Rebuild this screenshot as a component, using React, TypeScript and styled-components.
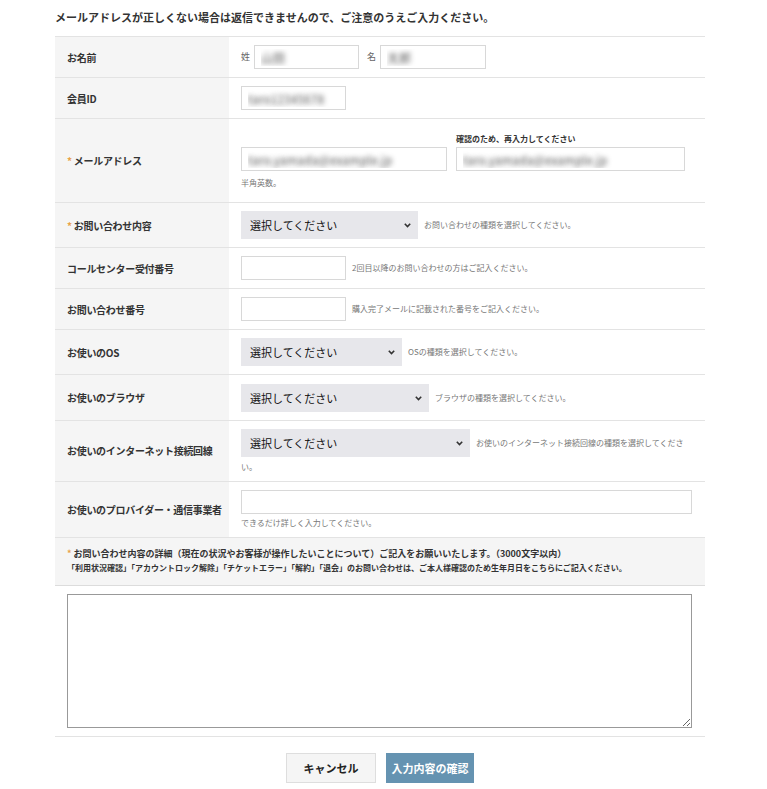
import React from "react";
import styled, { createGlobalStyle } from "styled-components";

const GlobalStyle = createGlobalStyle`
  body {
    margin: 0;
    background: #fff;
    font-family: "Noto Sans CJK JP", "Noto Sans", sans-serif;
    color: #333;
  }
`;

const Page = styled.div`
  width: 650px;
  margin-left: 55px;
  padding-top: 10px;
  padding-bottom: 6px;
`;

const Heading = styled.h2`
  margin: 0 0 12px;
  font-size: 11px;
  line-height: 14px;
  font-weight: 700;
  color: #333;
`;

const Table = styled.div`
  border-top: 1px solid #e3e3e3;
`;

const Row = styled.div`
  display: flex;
  border-bottom: 1px solid #e3e3e3;
`;

const Label = styled.div`
  width: 174px;
  flex-shrink: 0;
  box-sizing: border-box;
  padding: 0 12px;
  background: #f5f5f5;
  display: flex;
  align-items: center;
  white-space: nowrap;
  letter-spacing: -0.3px;
  font-size: 10px;
  font-weight: 700;
  color: #333;
`;

const Required = styled.span`
  color: #e8a24a;
  margin-right: 2px;
  font-weight: 700;
`;

const Value = styled.div<{ $pt?: number; $pb?: number }>`
  flex: 1;
  display: flex;
  align-items: center;
  padding: ${(p) => p.$pt ?? 8}px 12px ${(p) => p.$pb ?? 8}px;
`;

const Flow = styled.div`
  flex: 1;
  line-height: 14px;
`;

const Prefix = styled.span<{ $ml?: number }>`
  font-size: 9px;
  color: #666;
  margin-left: ${(p) => p.$ml ?? 0}px;
  margin-right: 4px;
  vertical-align: middle;
`;

const TextInput = styled.input<{ $w: number }>`
  box-sizing: border-box;
  width: ${(p) => p.$w}px;
  height: 24px;
  padding: 0 6px;
  border: 1px solid #d8d8d8;
  border-radius: 0;
  background: #fff;
  font-family: inherit;
  font-size: 12px;
  color: transparent;
  text-shadow: 0 0 5px rgba(80, 80, 80, 0.95);
  vertical-align: middle;
  outline: none;
`;

const SelectBox = styled.span<{ $w: number }>`
  position: relative;
  display: inline-block;
  width: ${(p) => p.$w}px;
  height: 28px;
  vertical-align: middle;
`;

const Select = styled.select`
  appearance: none;
  width: 100%;
  height: 100%;
  border: none;
  border-radius: 0;
  background: #e7e7eb;
  padding: 0 9px;
  font-family: inherit;
  font-size: 11px;
  color: #111;
  outline: none;
`;

const Chevron = styled.svg`
  position: absolute;
  right: 7px;
  top: 12px;
  pointer-events: none;
`;

const Note = styled.span<{ $block?: boolean }>`
  font-size: 8px;
  color: #777;
  margin-left: ${(p) => (p.$block ? 0 : 6)}px;
  display: ${(p) => (p.$block ? "block" : "inline")};
  margin-top: ${(p) => (p.$block ? 3 : 0)}px;
  line-height: 12px;
  vertical-align: middle;
`;

const MailGrid = styled.div`
  display: grid;
  grid-template-columns: 206px 229px;
  column-gap: 9px;
  row-gap: 3px;
  align-items: end;
`;

const SubLabel = styled.div`
  font-size: 8px;
  font-weight: 700;
  color: #333;
  line-height: 11px;
`;

const Details = styled.div`
  background: #f5f5f5;
  border-bottom: 1px solid #dcdcdc;
  padding: 9px 12px 11px;
`;

const DetailsLead = styled.div`
  font-size: 9px;
  font-weight: 700;
  line-height: 13px;
  color: #333;
`;

const DetailsSub = styled.div`
  font-size: 8px;
  font-weight: 700;
  line-height: 12px;
  margin-top: 2px;
  color: #333;
`;

const TextAreaWrap = styled.div`
  padding: 8px 13px 8px 12px;
  border-bottom: 1px solid #e3e3e3;
`;

const TextArea = styled.textarea`
  display: block;
  box-sizing: border-box;
  width: 100%;
  height: 134px;
  border: 1px solid #999;
  border-radius: 0;
  resize: vertical;
  font-family: inherit;
  font-size: 11px;
  outline: none;
`;

const Buttons = styled.div`
  display: flex;
  justify-content: center;
  gap: 10px;
  margin-top: 16px;
`;

const Button = styled.button<{ $primary?: boolean }>`
  height: 30px;
  width: ${(p) => (p.$primary ? 88 : 90)}px;
  border: 1px solid ${(p) => (p.$primary ? "#6593b1" : "#dedede")};
  background: ${(p) => (p.$primary ? "#6593b1" : "#f5f5f5")};
  color: ${(p) => (p.$primary ? "#fff" : "#222")};
  font-family: inherit;
  font-size: 11px;
  font-weight: 700;
  padding: 0;
  cursor: pointer;
`;

function Dropdown({ width }: { width: number }) {
  return (
    <SelectBox $w={width}>
      <Select defaultValue="">
        <option value="">選択してください</option>
      </Select>
      <Chevron width="7" height="5" viewBox="0 0 7 5">
        <path d="M0.8 0.8 L3.5 3.6 L6.2 0.8" fill="none" stroke="#333" strokeWidth="1.6" />
      </Chevron>
    </SelectBox>
  );
}

export default function App() {
  return (
    <>
      <GlobalStyle />
      <Page>
        <Heading>メールアドレスが正しくない場合は返信できませんので、ご注意のうえご入力ください。</Heading>
        <Table>
          <Row>
            <Label>お名前</Label>
            <Value>
              <Flow>
                <Prefix>姓</Prefix>
                <TextInput $w={105} defaultValue="山田" />
                <Prefix $ml={8}>名</Prefix>
                <TextInput $w={106} defaultValue="太郎" />
              </Flow>
            </Value>
          </Row>
          <Row>
            <Label>会員ID</Label>
            <Value>
              <Flow>
                <TextInput $w={105} defaultValue="taro12345678" />
              </Flow>
            </Value>
          </Row>
          <Row>
            <Label>
              <Required>*</Required>メールアドレス
            </Label>
            <Value $pt={14} $pb={13}>
              <MailGrid>
                <span />
                <SubLabel>確認のため、再入力してください</SubLabel>
                <TextInput $w={206} defaultValue="taro.yamada@example.jp" />
                <TextInput $w={229} defaultValue="taro.yamada@example.jp" />
                <Note $block>半角英数。</Note>
                <span />
              </MailGrid>
            </Value>
          </Row>
          <Row>
            <Label>
              <Required>*</Required>お問い合わせ内容
            </Label>
            <Value>
              <Flow>
                <Dropdown width={177} />
                <Note>お問い合わせの種類を選択してください。</Note>
              </Flow>
            </Value>
          </Row>
          <Row>
            <Label>コールセンター受付番号</Label>
            <Value>
              <Flow>
                <TextInput $w={105} />
                <Note>2回目以降のお問い合わせの方はご記入ください。</Note>
              </Flow>
            </Value>
          </Row>
          <Row>
            <Label>お問い合わせ番号</Label>
            <Value>
              <Flow>
                <TextInput $w={105} />
                <Note>購入完了メールに記載された番号をご記入ください。</Note>
              </Flow>
            </Value>
          </Row>
          <Row>
            <Label>お使いのOS</Label>
            <Value>
              <Flow>
                <Dropdown width={161} />
                <Note>OSの種類を選択してください。</Note>
              </Flow>
            </Value>
          </Row>
          <Row>
            <Label>お使いのブラウザ</Label>
            <Value $pt={9}>
              <Flow>
                <Dropdown width={188} />
                <Note>ブラウザの種類を選択してください。</Note>
              </Flow>
            </Value>
          </Row>
          <Row>
            <Label>お使いのインターネット接続回線</Label>
            <Value>
              <Flow>
                <Dropdown width={229} />
                <Note>お使いのインターネット接続回線の種類を選択してください。</Note>
              </Flow>
            </Value>
          </Row>
          <Row>
            <Label>お使いのプロバイダー・通信事業者</Label>
            <Value>
              <Flow>
                <TextInput $w={451} />
                <Note $block>できるだけ詳しく入力してください。</Note>
              </Flow>
            </Value>
          </Row>
        </Table>
        <Details>
          <DetailsLead>
            <Required>*</Required>お問い合わせ内容の詳細（現在の状況やお客様が操作したいことについて）ご記入をお願いいたします。（3000文字以内）
          </DetailsLead>
          <DetailsSub>
            「利用状況確認」「アカウントロック解除」「チケットエラー」「解約」「退会」のお問い合わせは、ご本人様確認のため生年月日をこちらにご記入ください。
          </DetailsSub>
        </Details>
        <TextAreaWrap>
          <TextArea />
        </TextAreaWrap>
        <Buttons>
          <Button>キャンセル</Button>
          <Button $primary>入力内容の確認</Button>
        </Buttons>
      </Page>
    </>
  );
}
